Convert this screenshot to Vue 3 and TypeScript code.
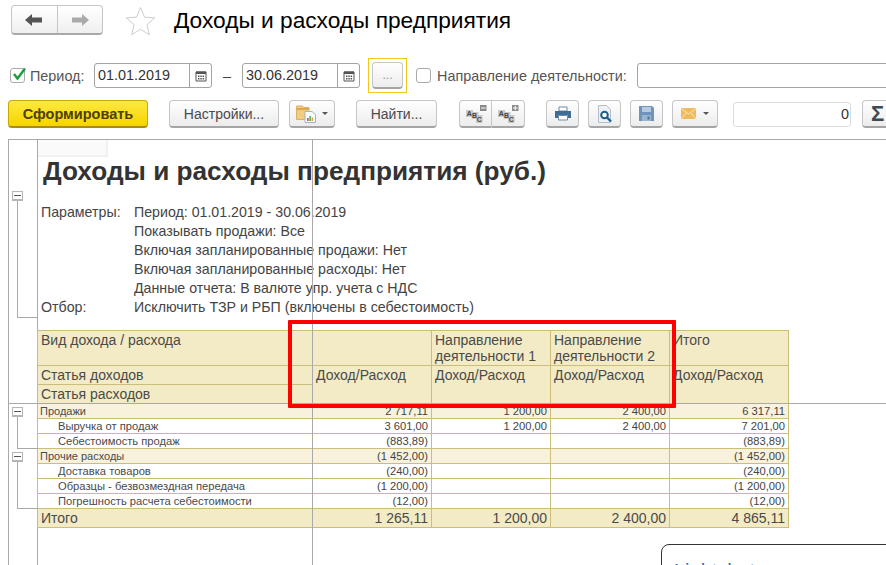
<script setup lang="ts">
interface Row { label: string; kind: 'group' | 'item'; v: string[] }
const rows: Row[] = [
  { label: 'Продажи', kind: 'group', v: ['2 717,11', '1 200,00', '2 400,00', '6 317,11'] },
  { label: 'Выручка от продаж', kind: 'item', v: ['3 601,00', '1 200,00', '2 400,00', '7 201,00'] },
  { label: 'Себестоимость продаж', kind: 'item', v: ['(883,89)', '', '', '(883,89)'] },
  { label: 'Прочие расходы', kind: 'group', v: ['(1 452,00)', '', '', '(1 452,00)'] },
  { label: 'Доставка товаров', kind: 'item', v: ['(240,00)', '', '', '(240,00)'] },
  { label: 'Образцы - безвозмездная передача', kind: 'item', v: ['(1 200,00)', '', '', '(1 200,00)'] },
  { label: 'Погрешность расчета себестоимости', kind: 'item', v: ['(12,00)', '', '', '(12,00)'] },
]
const params: [string, string][] = [
  ['Параметры:', 'Период: 01.01.2019 - 30.06.2019'],
  ['', 'Показывать продажи: Все'],
  ['', 'Включая запланированные продажи: Нет'],
  ['', 'Включая запланированные расходы: Нет'],
  ['', 'Данные отчета: В валюте упр. учета с НДС'],
  ['Отбор:', 'Исключить ТЗР и РБП (включены в себестоимость)'],
]
</script>

<template>
  <div class="page">
    <header class="head">
      <div class="nav">
        <button class="nav-btn">
          <svg width="18" height="14" viewBox="0 0 18 14"><path d="M0 7l7-6v3.500h10v5H7V13z" fill="#555"/></svg>
        </button>
        <button class="nav-btn">
          <svg width="18" height="14" viewBox="0 0 18 14"><path d="M18 7l-7-6v3.500H1v5h10V13z" fill="#aaa"/></svg>
        </button>
      </div>
      <svg class="star" width="31" height="30" viewBox="0 0 31 30"><path d="M15.500 1.500l4 9.600 10.300.8-7.900 6.700 2.500 10.100-8.900-5.400-8.900 5.400 2.500-10.100-7.900-6.700 10.300-.8z" fill="#fff" stroke="#c9cdd2"/></svg>
      <h1 class="page-title">Доходы и расходы предприятия</h1>
    </header>

    <div class="filters">
      <span class="check on">
        <svg width="16" height="15" viewBox="0 0 16 15"><path d="M3 7l3.500 4.500L14 1.500" fill="none" stroke="#1c9e3c" stroke-width="2.400"/></svg>
      </span>
      <span class="lab per">Период:</span>
      <div class="date">
        <span class="date-v">01.01.2019</span>
        <span class="date-b"><svg width="12" height="12" viewBox="0 0 12 12"><path d="M1 2h10v9H1z" fill="#fff" stroke="#555"/><path d="M1 1.500h10V4H1z" fill="#555"/><path d="M3 5.500h1.500V7H3zM5.300 5.500h1.500V7H5.300zM7.600 5.500h1.500V7H7.600zM3 8h1.500v1.500H3zM5.300 8h1.500v1.500H5.300zM7.600 8h1.500v1.500H7.600z" fill="#555"/></svg></span>
      </div>
      <span class="dash">–</span>
      <div class="date">
        <span class="date-v">30.06.2019</span>
        <span class="date-b"><svg width="12" height="12" viewBox="0 0 12 12"><path d="M1 2h10v9H1z" fill="#fff" stroke="#555"/><path d="M1 1.500h10V4H1z" fill="#555"/><path d="M3 5.500h1.500V7H3zM5.300 5.500h1.500V7H5.300zM7.600 5.500h1.500V7H7.600zM3 8h1.500v1.500H3zM5.300 8h1.500v1.500H5.300zM7.600 8h1.500v1.500H7.600z" fill="#555"/></svg></span>
      </div>
      <div class="focus"><button class="btn more">...</button></div>
      <span class="check off"></span>
      <span class="lab dir">Направление деятельности:</span>
      <div class="wide"></div>
    </div>

    <div class="actions">
      <button class="btn primary">Сформировать</button>
      <button class="btn b-set">Настройки...</button>
      <button class="btn b-var">
        <svg width="21" height="18" viewBox="0 0 21 18"><path d="M.5 2.500V1h6l1.500 1.500h5v12H.5z" fill="#f0cd83" stroke="#dcb164"/><path d="M.5 4h12.500" stroke="#d8a94f" stroke-width="2"/><path d="M9 6.500h7l3.500 3V17.500H9z" fill="#f8fafc" stroke="#9fb4c6"/><path d="M11 13h1.700v3H11z" fill="#d9534f"/><path d="M13.300 11H15v5h-1.700z" fill="#5cb85c"/><path d="M15.600 12.500h1.400V16h-1.400z" fill="#e0a13c"/></svg>
        <i class="caret"></i>
      </button>
      <button class="btn b-find">Найти...</button>
      <div class="split">
        <button class="btn seg">
          <svg class="abc" width="22" height="20" viewBox="0 0 22 20">
            <path d="M1 6h7v7H1zM6.500 8h7v7h-7zM11 11h6.500v8H11z" fill="#c9c9c9"/>
            <text x="1.800" y="12" font-size="7" font-weight="700" fill="#444">A</text>
            <text x="7" y="14" font-size="7" font-weight="700" fill="#444">B</text>
            <text x="11.800" y="18" font-size="7" font-weight="700" fill="#444">C</text>
            <path d="M15 1h6.500v6H15z" fill="#8a8a8a"/><path d="M16 4h4.500" stroke="#fff"/>
          </svg>
        </button>
        <button class="btn seg">
          <svg class="abc" width="22" height="20" viewBox="0 0 22 20">
            <path d="M1 6h7v7H1zM6.500 8h7v7h-7zM11 11h6.500v8H11z" fill="#c9c9c9"/>
            <text x="1.800" y="12" font-size="7" font-weight="700" fill="#444">A</text>
            <text x="7" y="14" font-size="7" font-weight="700" fill="#444">B</text>
            <text x="11.800" y="18" font-size="7" font-weight="700" fill="#444">C</text>
            <path d="M15 1h6.500v6H15z" fill="#8a8a8a"/><path d="M16 4h4.500M18.250 1.800v4.400" stroke="#fff"/>
          </svg>
        </button>
      </div>
      <button class="btn b-ico b-print">
        <svg width="16" height="15" viewBox="0 0 16 15"><path d="M4 1h8v4H4z" fill="#fff" stroke="#6d8ba6"/><path d="M0 5h16v7h-3V9H3v3H0z" fill="#3e6d97"/><path d="M3.500 9.500h9V14h-9z" fill="#fff" stroke="#6d8ba6"/></svg>
      </button>
      <button class="btn b-ico">
        <svg width="16" height="18" viewBox="0 0 16 18"><path d="M1.500.5h8l4 4v13h-12z" fill="#eef1f4" stroke="#b5bec7"/><circle cx="7.500" cy="10" r="3.300" fill="#fff" stroke="#17608f" stroke-width="2"/><path d="M10 12.500l4 4" stroke="#17608f" stroke-width="2.400"/></svg>
      </button>
      <button class="btn b-ico">
        <svg width="15" height="15" viewBox="0 0 15 15"><path d="M0 0h13l2 2v13H0z" fill="#6f93ba"/><path d="M3 1h9v5H3z" fill="#b7cbe0"/><path d="M3 9h9v6H3z" fill="#9bb5d1"/><path d="M8.500 10.500h2v3h-2z" fill="#4d7097"/></svg>
      </button>
      <button class="btn b-mail">
        <svg width="15" height="11" viewBox="0 0 15 11"><path d="M0 0h15v11H0z" fill="#eebc5f"/><path d="M0 .5l7.500 5.500L15 .5M0 11l5.500-6.500M15 11L9.500 4.500" fill="none" stroke="#f9e2b0"/></svg>
        <i class="caret"></i>
      </button>
      <div class="sum">0</div>
      <button class="btn b-sigma">Σ</button>
    </div>

    <section class="report">
      <div class="outline"></div>
      <div class="doc">
        <h2 class="rep-title">Доходы и расходы предприятия (руб.)</h2>
        <div class="params">
          <template v-for="(p, i) in params" :key="i">
            <span>{{ p[0] }}</span><span>{{ p[1] }}</span>
          </template>
        </div>
        <table class="grid">
          <colgroup>
            <col class="c0" /><col class="c" /><col class="c" /><col class="c" /><col class="c" />
          </colgroup>
          <tbody>
            <tr class="h1">
              <th>Вид дохода / расхода</th>
              <th></th>
              <th>Направление деятельности 1</th>
              <th>Направление деятельности 2</th>
              <th>Итого</th>
            </tr>
            <tr class="h2">
              <th>Статья доходов</th>
              <th rowspan="2">Доход/Расход</th>
              <th rowspan="2">Доход/Расход</th>
              <th rowspan="2">Доход/Расход</th>
              <th rowspan="2">Доход/Расход</th>
            </tr>
            <tr class="h2">
              <th>Статья расходов</th>
            </tr>
            <tr v-for="r in rows" :key="r.label" :class="['row', r.kind]">
              <td class="name">{{ r.label }}</td>
              <td v-for="(x, i) in r.v" :key="i" class="num">{{ x }}</td>
            </tr>
            <tr class="total">
              <td>Итого</td>
              <td>1 265,11</td><td>1 200,00</td><td>2 400,00</td><td>4 865,11</td>
            </tr>
          </tbody>
        </table>
      </div>
      <div class="corner"></div>
      <div class="tree top"><span class="minus"></span></div>
      <div class="tree t1"><span class="minus"></span></div>
      <div class="tree t2"><span class="minus"></span></div>
      <div class="vline"></div>
      <div class="hline"></div>
      <div class="red"></div>
      <div class="callout"><span>Lightshot</span></div>
    </section>
  </div>
</template>

<style>
html, body { margin: 0; background: #fff; }
</style>

<style scoped>
.page {
  width: 886px; height: 565px; overflow: hidden; background: #fff;
  font-family: "Liberation Sans", Arial, sans-serif; color: #4a4a4a;
  display: flex; flex-direction: column; position: relative;
}
button { font-family: inherit; padding: 0; margin: 0; }
.head { height: 58px; display: flex; align-items: flex-start; flex: none; }
.nav { margin: 5px 0 0 11px; width: 92px; height: 30px; display: flex; box-sizing: border-box; border: 1px solid #c6c6c6; border-bottom: 2px solid #a9a9a9; border-radius: 4px; background: linear-gradient(#fff, #efefef); }
.nav-btn { flex: 1; border: 0; background: none; display: flex; align-items: center; justify-content: center; }
.nav-btn + .nav-btn { border-left: 1px solid #c6c6c6; }
.star { margin: 6px 0 0 22px; }
.page-title { margin: 5px 0 0 18px; font-size: 22.7px; font-weight: 400; line-height: 30px; color: #000; white-space: nowrap; }

.filters { height: 35px; display: flex; align-items: center; flex: none; padding-left: 10px; font-size: 14.4px; }
.check { width: 15px; height: 15px; box-sizing: border-box; border: 1px solid #aaa; border-radius: 3px; display: block; flex: none; position: relative; }
.check svg { position: absolute; left: 0; top: -2px; }
.lab { color: #555; white-space: nowrap; flex: none; }
.per { margin-left: 5px; width: 64px; }
.date { width: 118px; height: 25px; box-sizing: border-box; border: 1px solid #a3a3a3; border-radius: 3px; display: flex; flex: none; }
.date-v { flex: 1; padding-left: 3px; line-height: 23px; color: #333; font-size: 14.4px; }
.date-b { width: 21px; border-left: 1px solid #a3a3a3; display: flex; align-items: center; justify-content: center; }
.dash { width: 30px; text-align: center; color: #444; flex: none; }
.focus { margin-left: 8px; width: 39px; height: 35px; box-sizing: border-box; border: 1px solid #f2c81a; display: flex; align-items: center; justify-content: center; flex: none; }
.btn { box-sizing: border-box; border: 1px solid #c6c6c6; border-bottom: 2px solid #a5a5a5; border-radius: 4px; background: linear-gradient(#fff, #ececec); color: #4a4a4a; font-size: 14px; height: 28px; display: flex; align-items: center; justify-content: center; flex: none; white-space: nowrap; }
.more { width: 31px; height: 27px; color: #999; font-size: 12px; }
.off { margin-left: 9px; }
.dir { margin-left: 6px; width: 200px; }
.wide { width: 300px; height: 25px; box-sizing: border-box; border: 1px solid #a3a3a3; border-radius: 3px; flex: none; }

.actions { display: flex; align-items: center; height: 28px; margin-top: 7px; padding-left: 8px; flex: none; }
.primary { width: 140px; border: 1px solid #c9a800; border-bottom: 2px solid #a98f00; background: linear-gradient(#ffe93f, #f5d400); color: #4d4000; font-weight: 700; font-size: 14.5px; }
.b-set { width: 110px; margin-left: 21px; }
.b-var { width: 46px; margin-left: 10px; gap: 5px; }
.b-find { width: 81px; margin-left: 21px; }
.split { display: flex; margin-left: 22px; }
.seg { width: 33px; border-radius: 4px 0 0 4px; }
.seg + .seg { border-left: 0; border-radius: 0 4px 4px 0; }
.abc text { font-family: "Liberation Sans", Arial, sans-serif; }
.b-ico { width: 33px; margin-left: 9px; }
.b-print { margin-left: 21px; }
.b-mail { width: 46px; margin-left: 9px; gap: 7px; }
.caret { width: 0; height: 0; border: 3px solid transparent; border-top: 3px solid #555; border-bottom: 0; }
.sum { width: 118px; height: 25px; box-sizing: border-box; margin-left: 15px; border: 1px solid #dcdcdc; border-radius: 3px; text-align: right; padding-right: 1px; line-height: 23px; font-size: 14.4px; color: #333; flex: none; }
.b-sigma { width: 40px; margin-left: 11px; font-size: 22px; font-weight: 700; color: #3c4a55; justify-content: flex-start; padding-left: 8px; }

.report { position: absolute; left: 8px; top: 139px; right: 0; bottom: 0; border-top: 1px solid #a9a9a9; border-left: 1px solid #a9a9a9; display: flex; }
.outline { width: 28px; flex: none; border-right: 1px solid #a9a9a9; }
.doc { flex: 1; min-width: 0; color: #4a4a4a; }
.corner { position: absolute; left: 29px; top: 0; width: 70px; height: 17px; box-sizing: border-box; background: #fafafa; border-right: 2px solid #f1f1f1; border-bottom: 2px solid #f1f1f1; }
.rep-title { margin: 14px 0 0 5px; font-size: 26.2px; line-height: 34px; font-weight: 700; color: #333; white-space: nowrap; }
.params { margin: 15px 0 0 3px; display: grid; grid-template-columns: 93px auto; grid-auto-rows: 19px; font-size: 14.2px; line-height: 19px; color: #444; }
.grid { margin: 13px 0 0 -1px; border-collapse: collapse; table-layout: fixed; width: 751px; }
.c0 { width: 275px; }
.c { width: 119px; }
.grid th, .grid td { border: 1px solid #cbbd7a; padding: 0; overflow: hidden; font-weight: 400; text-align: left; vertical-align: top; }
.grid th { background: #f3ebc5; font-size: 14px; line-height: 16px; padding: 1px 3px 0; color: #4a4a4a; }
.h1 { height: 35px; }
.h2 { height: 19px; }
.h2 th { white-space: nowrap; }
.row { height: 15px; }
.row td { font-size: 11.2px; line-height: 14px; white-space: nowrap; }
.group td { background: #f8f2dc; }
.group .name { padding-left: 2px; font-size: 11px; }
.item .name { padding-left: 20px; }
.num { text-align: right !important; padding-right: 3px !important; color: #444; }
.total { height: 19px; }
.total td { background: #f3ebc5; font-size: 14px; line-height: 18px; text-align: right; padding-right: 3px; }
.total td:first-child { text-align: left; padding-left: 3px; }

.tree { position: absolute; left: 8px; width: 21px; border-left: 1px solid #a9a9a9; border-bottom: 1px solid #a9a9a9; box-sizing: border-box; }
.top { top: 51px; height: 127px; }
.t1 { top: 267px; height: 42px; }
.t2 { top: 312px; height: 57px; }
.minus { position: absolute; left: -6px; top: 0; width: 11px; height: 10px; box-sizing: border-box; background: #fff; border: 1px solid #b5b5b5; border-bottom-width: 2px; }
.minus::after { content: ""; position: absolute; left: 1px; right: 1px; top: 3px; height: 1px; background: #555; }
.vline { position: absolute; left: 303px; top: 0; bottom: 0; width: 1px; background: #a9a9a9; }
.hline { position: absolute; left: 0; right: 0; top: 263px; height: 1px; background: #a9a9a9; }
.red { position: absolute; left: 279px; top: 180px; width: 388px; height: 88px; box-sizing: border-box; border: 4px solid #f00; border-radius: 1px; }
.callout { position: absolute; left: 652px; top: 404px; width: 300px; height: 60px; box-sizing: border-box; border: 1px solid #333; border-radius: 8px; background: #fff; padding: 15px 0 0 12px; font-size: 20px; line-height: 22px; color: #2a6fc4; }
</style>
